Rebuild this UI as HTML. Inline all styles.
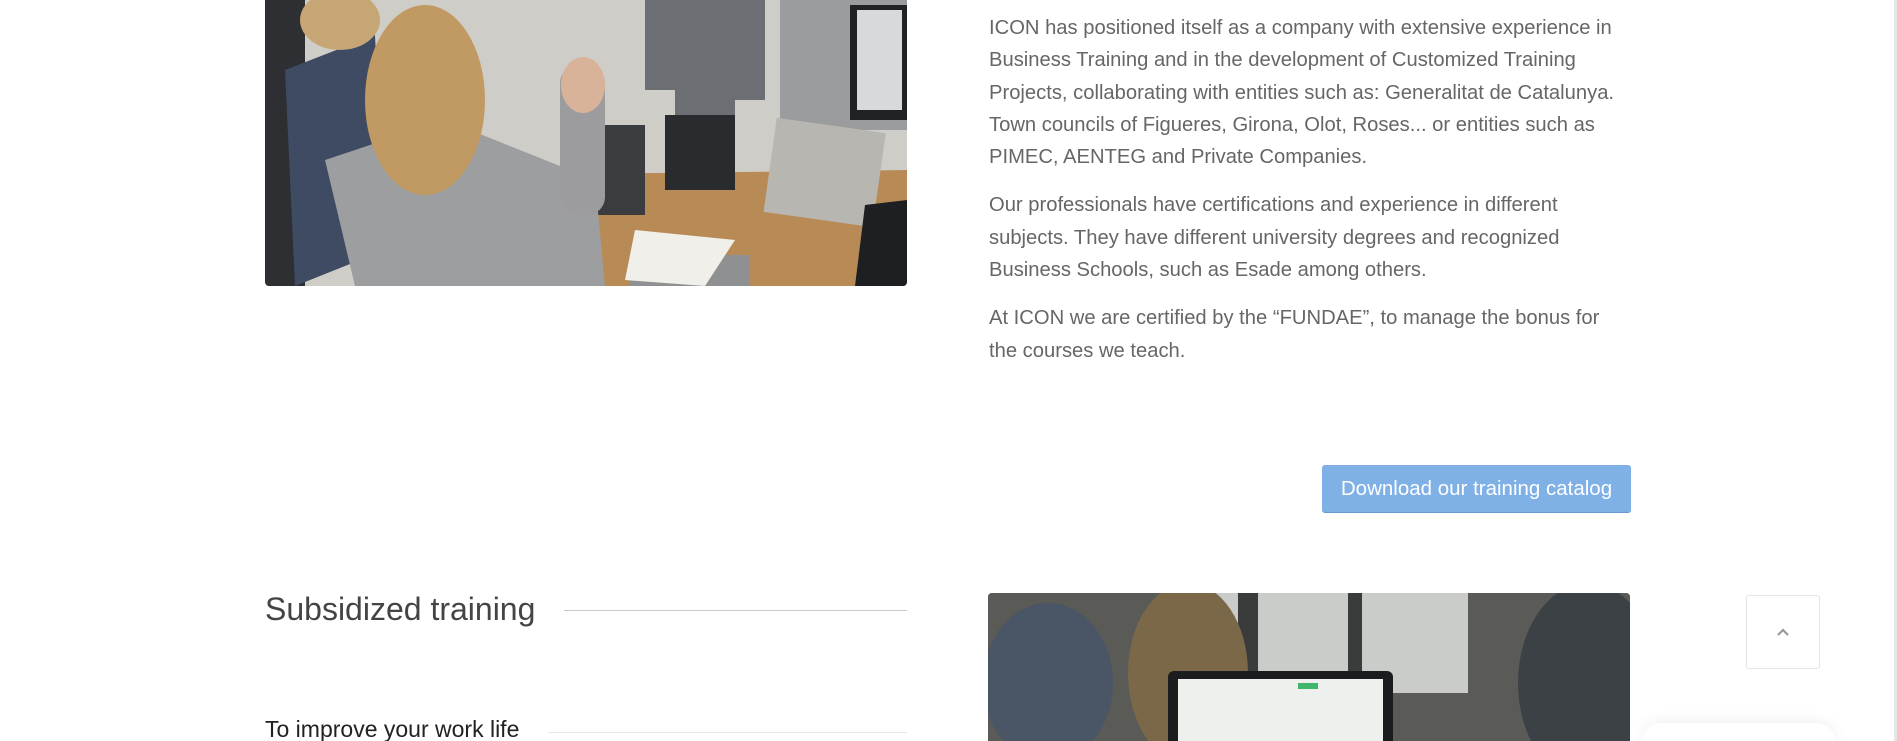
<!DOCTYPE html>
<html><head><meta charset="utf-8"><style>
html,body{margin:0;padding:0;background:#fff;width:1897px;height:741px;overflow:hidden;position:relative;font-family:"Liberation Sans",sans-serif}
.abs{position:absolute}
.txt{left:989px;width:644px;color:#666;font-size:20.2px;line-height:32.3px}
.txt p{margin:0}
</style></head><body>
<div class="abs" style="left:265px;top:0;width:642px;height:286px;border-radius:0 0 4px 4px;overflow:hidden;background:#c9c7c3">
<svg width="642" height="286" viewBox="0 0 642 286">
<rect width="642" height="286" fill="#cfcdc8"/>
<rect x="0" y="0" width="40" height="286" fill="#2d2f33"/>
<rect x="515" y="0" width="127" height="130" fill="#9a9c9e"/>
<rect x="585" y="5" width="57" height="115" fill="#1f2326"/>
<rect x="592" y="10" width="45" height="100" fill="#d7dadb"/>
<path d="M380 0h120v100h-30v70h-60v-80h-30z" fill="#6b6e73"/>
<polygon points="230,175 642,170 642,286 320,286" fill="#b88b56"/>
<rect x="505" y="125" width="110" height="95" fill="#b8b6b0" transform="rotate(8 560 170)"/>
<rect x="400" y="115" width="70" height="75" fill="#2a2b2f"/>
<rect x="330" y="125" width="50" height="90" fill="#3a3c40"/>
<rect x="365" y="255" width="120" height="31" fill="#8f9092"/>
<polygon points="370,230 470,240 440,286 360,280" fill="#f1efe9"/>
<polygon points="600,205 642,200 642,286 590,286" fill="#1e1f22"/>
<polygon points="20,70 110,35 120,250 30,286" fill="#3e4b63"/>
<polygon points="60,160 180,120 330,180 340,286 90,286" fill="#9d9ea0"/>
<ellipse cx="160" cy="100" rx="60" ry="95" fill="#c09a62"/>
<ellipse cx="75" cy="20" rx="40" ry="30" fill="#c7a675"/>
<rect x="295" y="65" width="45" height="150" rx="18" fill="#9c9c9e"/>
<ellipse cx="318" cy="85" rx="22" ry="28" fill="#d8b39a"/>
</svg></div>

<div class="abs txt" style="top:12px">
<p>ICON has positioned itself as a company with extensive experience in Business Training and in the development of Customized Training Projects, collaborating with entities such as: Generalitat de Catalunya. Town councils of Figueres, Girona, Olot, Roses... or entities such as PIMEC, AENTEG and Private Companies.</p>
<p style="margin-top:16px">Our professionals have certifications and experience in different subjects. They have different university degrees and recognized Business Schools, such as Esade among others.</p>
<p style="margin-top:16px">At ICON we are certified by the “FUNDAE”, to manage the bonus for the courses we teach.</p>
</div>

<div class="abs" style="left:1322px;top:465px;width:309px;height:47px;background:#7fb0e6;border-radius:3px;color:#fff;font-size:20.5px;line-height:47px;text-align:center;box-shadow:0 1px 0 #6a9bd3">Download our training catalog</div>

<div class="abs" style="left:265px;top:589px;font-size:32px;color:#444;line-height:40px">Subsidized training</div>
<div class="abs" style="left:564px;top:610px;width:343px;height:1px;background:#c8c8c8"></div>
<div class="abs" style="left:265px;top:715px;font-size:23px;color:#222;line-height:28px">To improve your work life</div>
<div class="abs" style="left:548px;top:732px;width:359px;height:1px;background:#e8e8e8"></div>

<div class="abs" style="left:988px;top:593px;width:642px;height:148px;border-radius:4px 4px 0 0;overflow:hidden;background:#4a4a45">
<svg width="642" height="160">
<rect width="642" height="160" fill="#5a5b57"/>
<rect x="180" y="0" width="300" height="100" fill="#c9ccc9"/>
<rect x="250" y="0" width="20" height="150" fill="#3a3c3c"/>
<rect x="360" y="0" width="14" height="150" fill="#3a3c3c"/>
<ellipse cx="60" cy="90" rx="65" ry="80" fill="#4a5565"/>
<ellipse cx="200" cy="80" rx="60" ry="90" fill="#7a6848"/>
<ellipse cx="600" cy="90" rx="70" ry="100" fill="#3c4146"/>
<rect x="180" y="78" width="225" height="90" rx="6" fill="#1b1c1d"/>
<rect x="190" y="86" width="205" height="80" fill="#eef0ee"/>
<rect x="310" y="90" width="20" height="6" fill="#3fb66b"/>
</svg></div>

<div class="abs" style="left:1746px;top:595px;width:72px;height:72px;border:1px solid #e4e4e4;border-radius:3px;background:#fff">
<svg width="72" height="72" class="abs" style="left:0;top:0"><path d="M31 39l5-5 5 5" fill="none" stroke="#999" stroke-width="2.2"/></svg></div>

<div class="abs" style="left:1643px;top:723px;width:192px;height:18px;background:#fff;border-radius:18px 18px 0 0;box-shadow:0 0 16px rgba(0,0,0,0.08)"></div>
<div class="abs" style="left:1894px;top:0;width:3px;height:741px;background:#e6e6e6"></div>
</body></html>
